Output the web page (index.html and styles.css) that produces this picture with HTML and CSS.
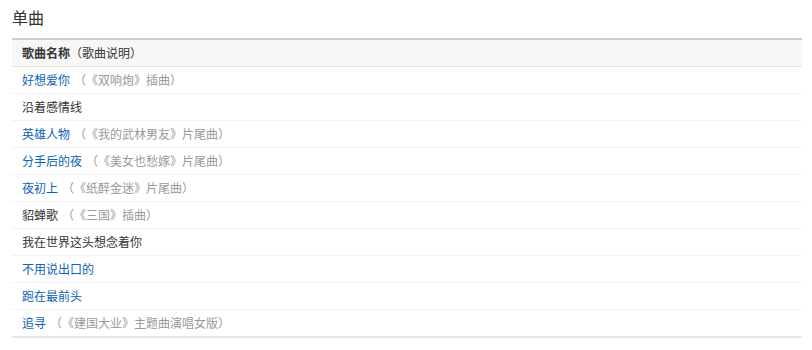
FILE: index.html
```html
<!DOCTYPE html>
<html lang="zh">
<head>
<meta charset="utf-8">
<link rel="stylesheet" href="styles.css">
</head>
<body>
<div class="wrap">
  <h2 class="title">单曲</h2>
  <table class="songs">
    <thead>
      <tr><th><b>歌曲名称</b><span class="hnote">（歌曲说明）</span></th></tr>
    </thead>
    <tbody>
      <tr><td><a href="#">好想爱你</a><span class="note">（《双响炮》插曲）</span></td></tr>
      <tr><td><span class="plain">沿着感情线</span></td></tr>
      <tr><td><a href="#">英雄人物</a><span class="note">（《我的武林男友》片尾曲）</span></td></tr>
      <tr><td><a href="#">分手后的夜</a><span class="note">（《美女也愁嫁》片尾曲）</span></td></tr>
      <tr><td><a href="#">夜初上</a><span class="note">（《纸醉金迷》片尾曲）</span></td></tr>
      <tr><td><span class="plain">貂蝉歌</span><span class="note">（《三国》插曲）</span></td></tr>
      <tr><td><span class="plain">我在世界这头想念着你</span></td></tr>
      <tr><td><a href="#">不用说出口的</a></td></tr>
      <tr><td><a href="#">跑在最前头</a></td></tr>
      <tr><td><a href="#">追寻</a><span class="note">（《建国大业》主题曲演唱女版）</span></td></tr>
    </tbody>
  </table>
</div>
</body>
</html>
```
FILE: styles.css
```css
html, body {
  margin: 0;
  padding: 0;
  background: #fff;
}
body {
  font-family: "Noto Sans CJK SC", "Noto Sans", sans-serif;
  font-size: 12px;
  color: #333;
  text-spacing-trim: space-all;
  font-kerning: none;
}
.wrap {
  padding: 0 10px 0 12px;
}
.title {
  margin: 0 0 10px;
  padding-top: 6px;
  font-size: 16px;
  line-height: 22px;
  font-weight: normal;
  color: #333;
}
.songs {
  width: 790px;
  border-collapse: collapse;
  border-top: 2px solid #cfcfcf;
  border-bottom: 2px solid #e6e6e6;
}
.songs th {
  background: #f7f7f7;
  text-align: left;
  font-weight: normal;
  height: 26px;
  padding: 0 0 0 10px;
  border-bottom: 1px solid #e4e4e4;
  line-height: 26px;
}
.songs th b {
  font-weight: bold;
  color: #333;
}
.hnote {
  color: #333;
}
.songs td {
  height: 26px;
  padding: 0 0 0 10px;
  line-height: 26px;
  border-bottom: 1px solid #f2f2f2;
}
.songs tbody tr:last-child td {
  border-bottom: none;
}
.songs a {
  color: #0d63b5;
  text-decoration: none;
}
.plain {
  color: #333;
}
.note {
  color: #999;
  margin-left: 4px;
}
```
